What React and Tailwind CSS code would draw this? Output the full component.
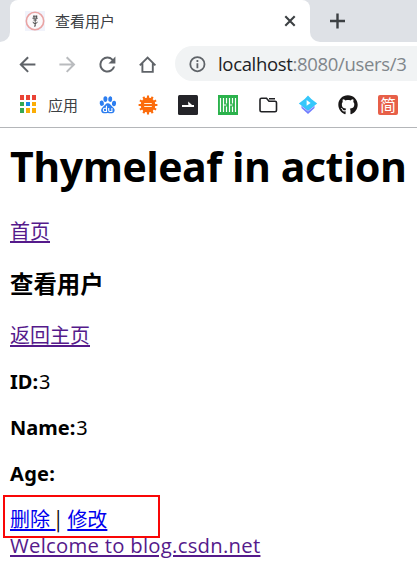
import React from "react";
import { FaGithub } from "react-icons/fa";

const cjk = "font-['Noto_Sans','Noto_Sans_CJK_SC',sans-serif]";
const cjkText = "font-['Noto_Sans_CJK_SC',sans-serif] font-normal";

function Icon({ children, color = "#5f6368", viewBox = "2 2 20 20" }) {
  return (
    <svg className="h-5 w-5 shrink-0" viewBox={viewBox} fill={color}>
      {children}
    </svg>
  );
}

function TabStrip() {
  return (
    <div className="flex h-[42px] bg-[#dee1e6]">
      <div className="flex w-[10px] shrink-0 bg-white">
        <div className="w-full rounded-br-[10px] bg-[#dee1e6]" />
      </div>
      <div className="flex w-[300px] shrink-0 items-center rounded-t-[8px] bg-white pl-[15px] pr-[10px]">
        <svg className="h-5 w-5" viewBox="0 0 20 20" fill="none">
          <rect width="20" height="20" fill="#f1f3fb" />
          <circle cx="10" cy="10" r="8.7" fill="#fbf8fa" stroke="#e9a3a3" strokeWidth="1.6" />
          <path d="M8 5.2h4.4M7.4 7.2h5.4M9 4.6v3M11.4 4.6v3M8.4 9h3.4M8 10.8q.4 2 2 2t2.4-2M10.2 8v7.2M9 15.1h1.4" stroke="#444" strokeWidth=".9" />
        </svg>
        <span className={`ml-[10px] text-[15px] leading-5 text-[#3c4043] ${cjkText}`}>查看用户</span>
        <svg className="ml-auto h-5 w-5" viewBox="0 0 20 20" fill="none" stroke="#3c4043" strokeWidth="2.1">
          <path d="m5.3 5.3 9.4 9.4M14.7 5.3l-9.4 9.4" />
        </svg>
      </div>
      <div className="flex grow bg-white">
        <div className="flex w-full items-center rounded-bl-[10px] bg-[#dee1e6] pl-[17px]">
          <svg className="h-5 w-5" viewBox="0 0 20 20" fill="none" stroke="#3c4043" strokeWidth="2.4">
            <path d="M3 10h15M10.5 2.5v15" />
          </svg>
        </div>
      </div>
    </div>
  );
}

function Toolbar() {
  const arrow = "M20 11H7.83l5.59-5.59L12 4l-8 8 8 8 1.41-1.41L7.83 13H20v-2z";
  return (
    <div className="flex h-[43px] items-center gap-5 pl-[18px]">
      <Icon viewBox="2.6 1.4 20 20"><path d={arrow} /></Icon>
      <Icon color="#b9bbbe" viewBox="2.6 1.4 20 20"><path d={arrow} transform="matrix(-1 0 0 1 24 0)" /></Icon>
      <Icon viewBox="2.6 1.4 20 20">
        <path d="M17.65 6.35A7.96 7.96 0 0 0 12 4a8 8 0 1 0 7.73 10h-2.08A6 6 0 1 1 12 6c1.66 0 3.14.69 4.22 1.78L13 11h7V4l-2.35 2.35z" />
      </Icon>
      <Icon viewBox="0 0 20 20">
        <path d="m1.8 11.3 7.8-7.8 7.8 7.8M4.4 9.3v8.6h10.4V9.3" fill="none" stroke="#5f6368" strokeWidth="1.9" />
      </Icon>
      <div className="-ml-[3px] flex h-[35px] grow items-center rounded-l-full bg-[#f1f3f4] pl-[12px]">
        <svg className="h-5 w-5 shrink-0" viewBox="0 0 20 20" fill="none" stroke="#5f6368" strokeWidth="1.8">
          <circle cx="10.4" cy="10.2" r="7.1" />
          <path d="M10.4 9.2v5M10.4 6v1.9" />
        </svg>
        <span className="ml-[11px] whitespace-nowrap font-['Open_Sans',sans-serif] text-[18.5px] leading-6 tracking-[-0.33px] text-[#80868b]">
          <span className="text-[#202124]">localhost</span>:8080/users/3
        </span>
      </div>
    </div>
  );
}

const appDots = [
  "#ea4335", "#ea4335", "#ea4335",
  "#34a853", "#1a88e8", "#fbad05",
  "#34a853", "#fbad05", "#fbad05",
];

function Bookmarks() {
  return (
    <div className="flex h-[43px] items-center gap-5 border-b border-[#b4b6b9] pb-[2px] pl-[20px]">
      <div className="-mr-[8px] -mt-[2px] grid w-[16px] grid-cols-3 gap-x-[2px] gap-y-[2px]">
        {appDots.map((c, i) => (
          <span key={i} className="h-[4.4px] w-[4.4px]" style={{ backgroundColor: c }} />
        ))}
      </div>
      <span className={`w-[30px] text-[15px] leading-5 text-[#3c4043] ${cjkText}`}>应用</span>
      <Icon color="#2d7ef0" viewBox="0 0 20 20">
        <ellipse cx="3.8" cy="8.2" rx="2.1" ry="2.7" transform="rotate(-12 3.8 8.2)" />
        <ellipse cx="7.4" cy="4.1" rx="2" ry="2.8" />
        <ellipse cx="12.2" cy="4.1" rx="2" ry="2.8" transform="rotate(8 12.2 4.1)" />
        <ellipse cx="16" cy="8.5" rx="2.1" ry="2.7" transform="rotate(12 16 8.5)" />
        <path d="M9.8 8.2c2.2 0 3 2 4.6 3.5 2 1.8 3 3.4 1.7 5.3-1.4 2.1-4 1-6.3 1s-4.9 1.1-6.2-1c-1.2-2 .1-3.9 1.8-5.4 1.6-1.4 2.2-3.4 4.4-3.4z" />
        <path d="M8.5 10.8v5.7H6.8q-1.5 0-1.5-1.6t1.5-1.6h1.7M10.7 13v2.3q0 1.2 1.2 1.2h2V13" fill="none" stroke="#fff" strokeWidth="1.1" />
      </Icon>
      <Icon color="#fc6c0c" viewBox="0 0 20 20">
        <circle cx="10" cy="10" r="7.4" />
        <path d="M10 .6v18.8M.6 10h18.8M5.3 1.9l9.4 16.2M14.7 1.9 5.3 18.1M1.9 5.3l16.2 9.4M18.1 5.3 1.9 14.7" stroke="#fc6c0c" strokeWidth="2.1" />
        <path d="M6.2 8.5h7.6M6.2 11.5h7.6" stroke="#fff3df" strokeWidth="1.2" />
      </Icon>
      <Icon viewBox="0 0 20 20">
        <rect width="20" height="20" rx="1.5" fill="#242429" />
        <path d="M4 11h12" stroke="#fff" strokeWidth="2" />
        <path d="M10.2 6.6 16.2 12h-3l-3-2.6z" fill="#fff" />
      </Icon>
      <Icon viewBox="0 0 20 20">
        <rect width="20" height="20" fill="#2bb24c" />
        <path d="M2.5 3v14M5.5 3v14M8.5 3v5.5M8.5 11.5V17M11.5 3v14M14.5 3v5.5M14.5 11.5V17M17.5 3v14M5.5 10h3M11.5 10h3" fill="none" stroke="#fff" strokeWidth="1.2" />
      </Icon>
      <Icon viewBox="0 0 20 20">
        <path d="M2 4.7q0-1.5 1.5-1.5h5l2.5 3h6q1.5 0 1.5 1.5v7.5q0 1.5-1.5 1.5h-13.5Q2 16.7 2 15.2zM11 3.8h6" fill="none" stroke="#202124" strokeWidth="1.6" />
      </Icon>
      <Icon viewBox="0 0 20 20">
        <path d="M3.5 10.5V13l6.5 6 6.5-6v-2.5z" fill="#6f7cff" />
        <path d="m3.5 11 6.5 5.2 6.5-5.2" fill="none" stroke="#dfe6ff" strokeWidth=".7" />
        <path d="m10 .5 3.3 3.5 5.9 4.5L10 15.6.8 8.5 6.7 4z" fill="#35c7fb" />
        <path d="M8.6 5v5.8l4-2.9z" fill="#fff" />
      </Icon>
      <FaGithub className="h-5 w-5 shrink-0 text-[#191717]" />
      <span className="flex h-5 w-5 shrink-0 items-center justify-center rounded-[2px] bg-[#e75f48] font-['Noto_Sans_CJK_SC',sans-serif] text-[16px] leading-5 text-white">
        <span className="-mt-[2px]">简</span>
      </span>
    </div>
  );
}

const link = "underline decoration-[1.5px] underline-offset-[2px] decoration-skip-ink-none";

export default function App() {
  return (
    <div className={`h-[568px] w-[417px] overflow-hidden bg-white text-black ${cjk}`}>
      <TabStrip />
      <Toolbar />
      <Bookmarks />
      <main className="px-[10px] pt-[10px] text-[20px] leading-[26px]">
        <h1 className="h-[56px] whitespace-nowrap font-['Open_Sans',sans-serif] text-[41px] font-bold leading-[56px] tracking-[-0.46px]">
          Thymeleaf in action
        </h1>
        <p className={`mt-[24px] text-[#551a8b] ${cjkText}`}><a className={link}>首页</a></p>
        <h3 className="mt-[26px] font-['Noto_Sans_CJK_SC',sans-serif] text-[23.4px] font-bold">查看用户</h3>
        <p className={`mt-[26px] text-[#551a8b] ${cjkText}`}><a className={link}>返回主页</a></p>
        <p className="mt-[21px]"><b>ID:</b><span className="ml-[1px]">3</span></p>
        <p className="mt-[20px]"><b>Name:</b><span className="ml-[1px]">3</span></p>
        <p className="mt-[20px]"><b className="tracking-[0.3px]">Age:</b></p>
        <div className="-ml-[7px] mt-[8px] h-[43px] w-[157px] border-2 border-[#f90606] pl-[5px] pt-[9px]">
          <div className={`whitespace-pre text-[#0000ee] ${cjkText}`}>
            <a className={link}>删除<span className="tracking-[1px]"> </span></a><span className="tracking-[1px] text-black">| </span><a className={link}>修改</a>
          </div>
        </div>
        <p className="-mt-[6px] whitespace-nowrap font-['Open_Sans',sans-serif] text-[20.3px] tracking-[0.27px] text-[#551a8b]">
          <a className={link}>Welcome to blog.csdn.net</a>
        </p>
      </main>
    </div>
  );
}
